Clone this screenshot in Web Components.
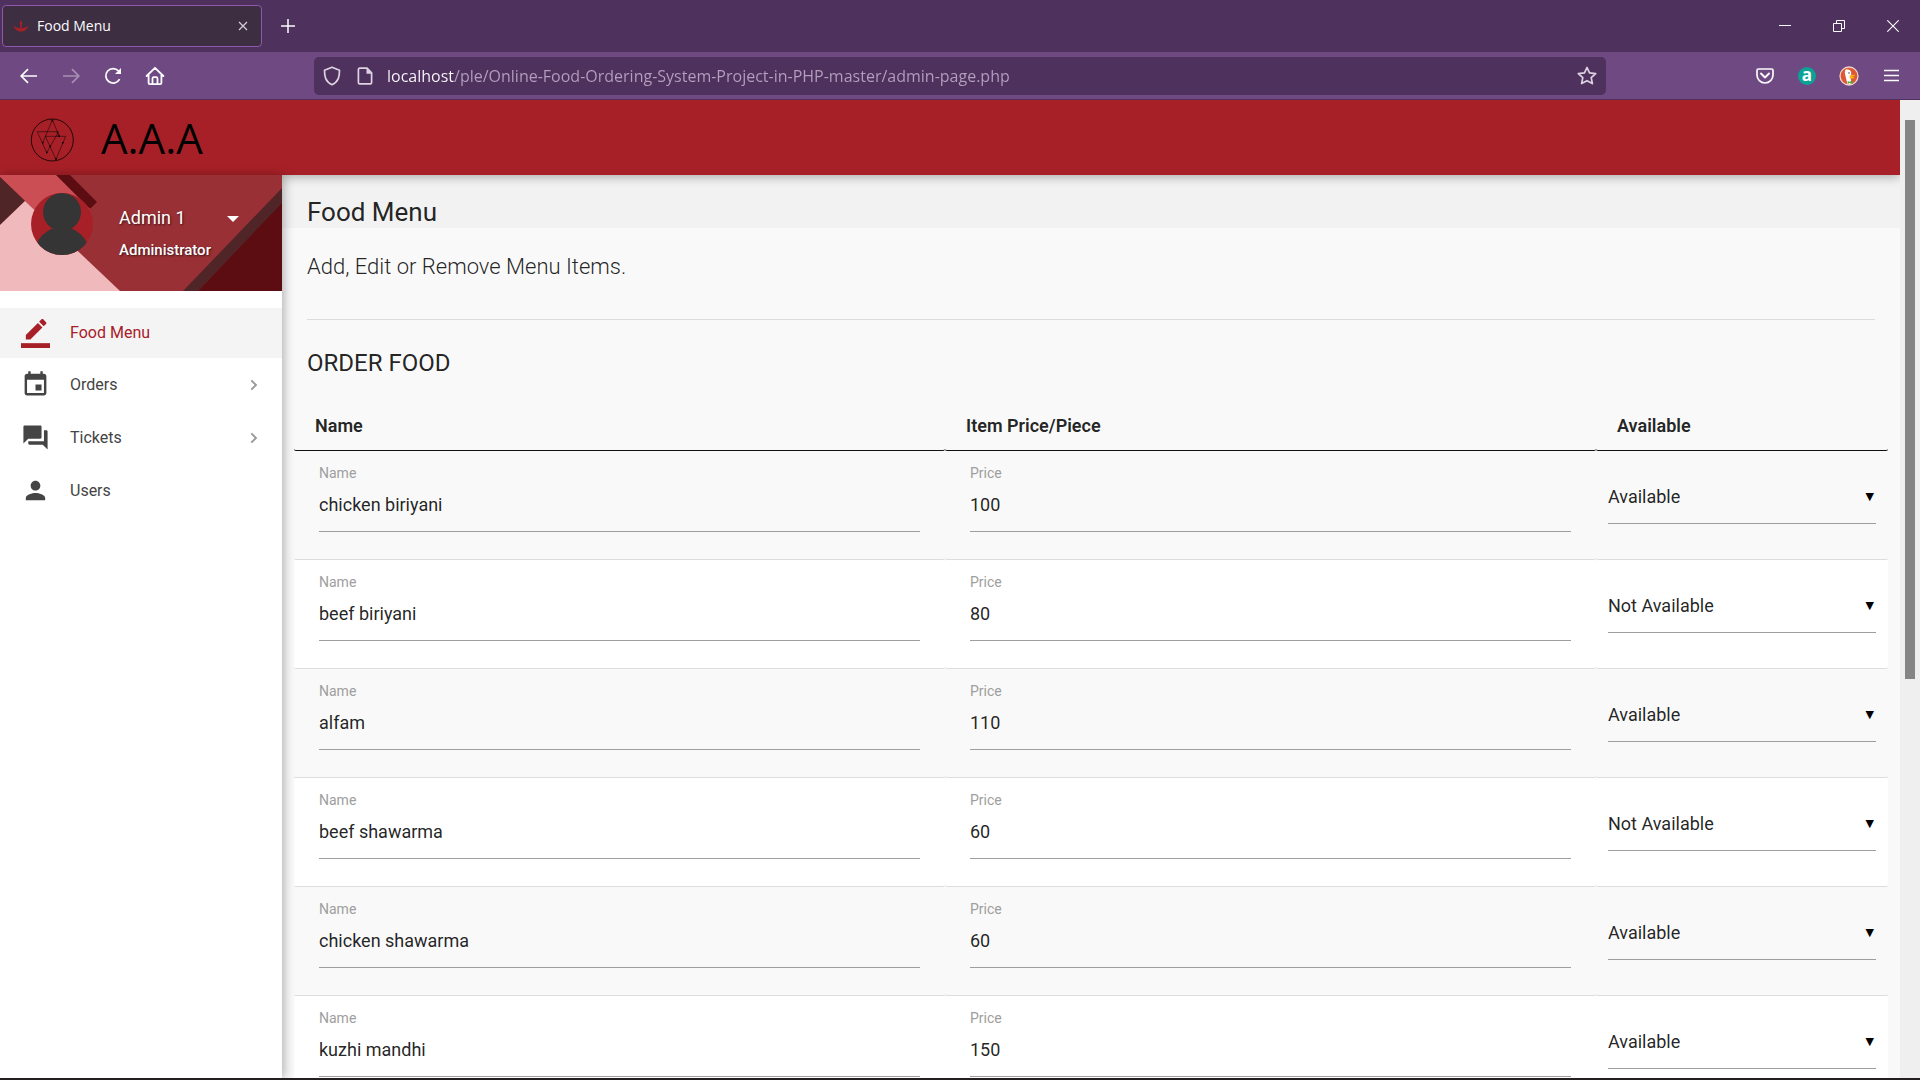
<!DOCTYPE html>
<html lang="en">
<head>
<meta charset="utf-8">
<title>Food Menu</title>
<style>
  html, body { margin: 0; height: 100%; overflow: hidden; background: #231f20; }
  body { font-family: Roboto, "Liberation Sans", sans-serif; color: rgba(0,0,0,.87); }
</style>
</head>
<body>
<browser-window>
  <browser-tab slot="tab">Food Menu</browser-tab>
  <admin-page></admin-page>
</browser-window>

<script>
const svg = (w, h, box, body) =>
  `<svg width="${w}" height="${h}" viewBox="${box}" fill="none" stroke="currentColor" aria-hidden="true">${body}</svg>`;

const ICONS = {
  back: svg(18, 16, '0 0 18 16', '<path d="M17 8H1.5M8 1.2L1.2 8 8 14.8" stroke-width="1.7"/>'),
  forward: svg(18, 16, '0 0 18 16', '<path d="M1 8h15.5M10 1.2L16.8 8 10 14.8" stroke-width="1.7"/>'),
  reload: svg(18, 18, '0 0 18 18', '<path d="M15.6 12.2A7.3 7.3 0 1 1 14.6 4" stroke-width="1.8"/><path d="M17 1v6h-6z" fill="currentColor" stroke="none"/>'),
  home: svg(20, 20, '0 0 20 20', '<path d="M1.6 10L10 1.8l8.400 8.200M3.600 8.500v8.500q0 1.200 1.200 1.200h10.400q1.200 0 1.200-1.200V8.500M7.500 18v-5.500q0-1.300 1.300-1.300h2.400q1.300 0 1.300 1.300V18" stroke-width="1.8" stroke-linejoin="round" stroke-linecap="round"/>'),
  shield: svg(18, 20, '0 0 18 20', '<path d="M9 1.300L16.500 4.300c0 6-.8 11.400-7.500 14.400C2.300 15.700 1.500 10.300 1.500 4.300z" stroke-width="1.700" stroke-linejoin="round"/>'),
  page: svg(16, 18, '0 0 16 18', '<path d="M2.800 1.200h7.200l4.600 4.600v9.600q0 1.400-1.400 1.400H2.800q-1.400 0-1.400-1.400V2.600q0-1.400 1.400-1.400z" stroke-width="1.700"/><path d="M9.500 1l5.300 5.800H9.500z" fill="currentColor" stroke="none"/>'),
  star: svg(20, 19, '0 0 20 19', '<path d="M10 1.500l2.500 5.400 6.200.7-4.500 4 1.200 6L10 14.700l-5.400 2.900 1.200-6-4.500-4 6.200-.7z" stroke-width="1.700" stroke-linejoin="round"/>'),
  pocket: svg(18, 16, '0 0 18 16', '<path d="M2.500 1h13q1.500 0 1.500 1.500V7a8 8 0 0 1-16 0V2.500Q1 1 2.500 1z" stroke-width="1.700"/><path d="M5 5.500l4 4 4-4" stroke-width="1.900" stroke-linecap="round" stroke-linejoin="round"/>'),
  menu: svg(15, 13, '0 0 15 13', '<path d="M0 1.500h15M0 6.500h15M0 11.500h15" stroke-width="1.700"/>'),
  plus: svg(16, 16, '0 0 16 16', '<path d="M8 1v14M1 8h14" stroke-width="1.500"/>'),
  closeTab: svg(10, 10, '0 0 10 10', '<path d="M1 1l8 8M9 1L1 9" stroke-width="1.200"/>'),
  minimize: svg(12, 12, '0 0 12 12', '<path d="M0 5.500h12"/>'),
  restore: svg(12, 12, '0 0 12 12', '<path d="M.5 3.500h8v8h-8zM3.500 3.500v-3h8v8h-3"/>'),
  close: svg(12, 12, '0 0 12 12', '<path d="M.3.300l11.400 11.400M11.700.300L.3 11.700" stroke-width="1.100"/>'),
  flame: svg(16, 12, '0 0 16 12', '<path d="M.3 5.500c2 2.200 4.600 2 6.700 3L7.300 5C6 3.500 7 2 8.600.200 8.400 1.800 10 3 8.800 5l-.4 3.500c2.500-1 5-.8 7.300-3-1.500 4-4.500 6-7.700 6S1.800 9.500.3 5.500z" fill="#a82027" stroke="none"/>'),
  duck: svg(20, 20, '0 0 20 20', '<circle cx="10" cy="10" r="9" fill="#de5833" stroke="#f3d5cc" stroke-width="1.300"/><path d="M8.300 17.800L6 8c-.5-2.500.2-4.300 2.600-4.500 2.600 0 3.800 1.800 3.600 4.500l-.7 3 .8 6.300q-2 1.400-4 .5z" fill="#fff" stroke="none"/><path d="M5.800 4.500q1.500-1.500 3-1.200l-2 1.900z" fill="#fff" stroke="none"/><path d="M10.500 9.500q3-1.300 6-.6-1 1.400-3.500 1.600 1.600.9 2.800.8-1.600 1.900-5.300.8z" fill="#fdb515" stroke="none"/><path d="M8.500 15l2 .8 3-1.200.3 3.200-3-.8-2 .8z" fill="#57a83f" stroke="none"/><circle cx="10" cy="7" r=".8" fill="#2d4f8e" stroke="none"/>'),
  edit: svg(29, 29, '0 0 24 24', '<g fill="currentColor" stroke="none"><path d="M17.750 7L14 3.250l-10 10V17h3.750l10-10zm2.960-2.960c.39-.39.39-1.020 0-1.410L18.370.290c-.39-.39-1.020-.39-1.410 0L15 2.250 18.750 6l1.960-1.960z"/><path d="M0 20h24v4H0z"/></g>'),
  event: svg(29, 29, '0 0 24 24', '<path fill="currentColor" stroke="none" d="M17 12h-5v5h5v-5zM16 1v2H8V1H6v2H5c-1.110 0-1.990.9-1.990 2L3 19c0 1.100.89 2 2 2h14c1.100 0 2-.9 2-2V5c0-1.100-.9-2-2-2h-1V1h-2zm3 18H5V8h14v11z"/>'),
  chat: svg(29, 29, '0 0 24 24', '<path fill="currentColor" stroke="none" d="M21 6h-2v9H6v2c0 .55.45 1 1 1h11l4 4V7c0-.55-.45-1-1-1zm-4 6V3c0-.55-.45-1-1-1H3c-.55 0-1 .45-1 1v14l4-4h10c.55 0 1-.45 1-1z"/>'),
  person: svg(29, 29, '0 0 24 24', '<path fill="currentColor" stroke="none" d="M12 12c2.210 0 4-1.790 4-4s-1.790-4-4-4-4 1.790-4 4 1.790 4 4 4zm0 2c-2.670 0-8 1.340-8 4v2h16v-2c0-2.660-5.330-4-8-4z"/>'),
  chevron: svg(8, 12, '0 0 8 12', '<path d="M1.300 1.300L6 6l-4.700 4.700" stroke-width="1.900"/>'),
  caret: svg(12, 6, '0 0 12 6', '<path d="M0 0h12L6 6z" fill="currentColor" stroke="none"/>'),
  logo: svg(44, 44, '0 0 44 44', '<circle cx="22.300" cy="22" r="21" stroke-width=".8"/><path d="M22.300 2l-9.600 22.700M22.300 2L29.300 18M7.300 13.700h21.400L16.700 34.700zM15.300 18.300h20.400L26 41.300zM29.300 18.300l-3-4.600" stroke-width=".5"/><path d="M21.500 1.500h1.700v1.700h-1.700zM25.200 40h1.700v1.700h-1.700zM16 33.800h1.500v1.500H16zM28.500 17.500h1.500V19h-1.500zM32 24h1.500v1.500H32zM19.300 27.500h1.500V29h-1.500zM12 24h1.500v1.500H12z" fill="currentColor" stroke="none"/>'),
  avatar: svg(62, 62, '0 0 62 62', '<g stroke="none"><circle cx="31" cy="31" r="31" fill="#a82027"/><clipPath id="c"><circle cx="31" cy="31" r="31"/></clipPath><g clip-path="url(#c)" fill="#353535"><circle cx="31" cy="19" r="19"/><ellipse cx="31" cy="61" rx="27.500" ry="27"/></g></g>')
};

function define(name, markup) {
  const template = document.createElement('template');
  customElements.define(name, class extends HTMLElement {
    connectedCallback() {
      if (this.shadowRoot) return;
      const root = this.attachShadow({ mode: 'open' });
      template.innerHTML = typeof markup === 'function' ? markup(this) : markup;
      root.append(template.content.cloneNode(true));
    }
  });
}

define('ui-icon', el => `
  <style>:host { display: inline-flex; } svg { display: block; }</style>
  ${ICONS[el.getAttribute('name')]}`);

define('icon-button', el => `
  <style>
    :host { display: flex; width: 42px; height: 38px; }
    button { flex: 1; display: flex; align-items: center; justify-content: center; padding: 0; border: 0; background: none; color: inherit; }
  </style>
  <button type="button" aria-label="${el.getAttribute('label')}"><slot></slot></button>`);

define('browser-tab', `
  <style>
    :host { display: flex; align-items: center; gap: 8px; box-sizing: border-box; width: 260px; height: 42px; margin: 5px 0 5px 2px; padding: 0 4px 0 10px;
      border: 1px solid #8f57ad; border-radius: 4px; background: #3d2f41; color: #fbfbfe;
      font: 14px/20px "Open Sans", "Noto Sans", sans-serif; }
    span { flex: 1; }
    icon-button { width: 28px; color: #d5cfd8; }
  </style>
  <ui-icon name="flame"></ui-icon><span><slot></slot></span>
  <icon-button label="Close tab"><ui-icon name="closeTab"></ui-icon></icon-button>`);

define('address-bar', `
  <style>
    :host { display: flex; align-items: center; height: 38px; box-sizing: border-box; padding: 0 9px; border-radius: 5px; background: #4f315e; color: #ddd3e2; }
    form { flex: 1; display: flex; margin: 0 0 0 14px; }
    input { flex: 1; padding: 0; border: 0; outline: 0; height: 30px; font: 16px/30px "Open Sans", "Noto Sans", sans-serif; color: #b3a0be;
      background: linear-gradient(90deg, #fbfbfe 67px, #b3a0be 67px); -webkit-background-clip: text; background-clip: text; -webkit-text-fill-color: transparent; }
    .page { margin-left: 16px; }
  </style>
  <ui-icon name="shield"></ui-icon>
  <ui-icon class="page" name="page"></ui-icon>
  <form><input type="text" aria-label="Address" value="localhost/ple/Online-Food-Ordering-System-Project-in-PHP-master/admin-page.php"></form>
  <ui-icon name="star"></ui-icon>`);

define('browser-window', `
  <style>
    :host { display: flex; flex-direction: column; height: calc(100vh - 2px); overflow: hidden; }
    .tabs { display: flex; align-items: center; height: 52px; background: #4f315e; color: #fbfbfe; }
    .tabs > icon-button { width: 54px; }
    .tabs > .new { width: 52px; }
    .spacer { flex: 1; }
    .tools { display: grid; grid-template-columns: 314px minmax(0, 1fr) 314px; align-items: center; height: 48px; box-sizing: border-box; background: #6f4a82; border-bottom: 1px solid #4f315e; color: #fbfbfe; }
    .group { display: flex; padding: 0 8px; }
    .end { justify-content: flex-end; }
    .off { color: #a68fb2; }
    .ext { width: 18px; height: 18px; border-radius: 50%; background: #0aa396; color: #fff; font: 700 17px/15px "Open Sans", sans-serif; text-align: center; }
    main { flex: 1; min-height: 0; display: grid; }
  </style>
  <div class="tabs">
    <slot name="tab"></slot>
    <icon-button class="new" label="New tab"><ui-icon name="plus"></ui-icon></icon-button>
    <span class="spacer"></span>
    <icon-button label="Minimize"><ui-icon name="minimize"></ui-icon></icon-button>
    <icon-button label="Restore"><ui-icon name="restore"></ui-icon></icon-button>
    <icon-button label="Close"><ui-icon name="close"></ui-icon></icon-button>
  </div>
  <div class="tools">
    <div class="group">
      <icon-button label="Back"><ui-icon name="back"></ui-icon></icon-button>
      <icon-button class="off" label="Forward"><ui-icon name="forward"></ui-icon></icon-button>
      <icon-button label="Reload"><ui-icon name="reload"></ui-icon></icon-button>
      <icon-button label="Home"><ui-icon name="home"></ui-icon></icon-button>
    </div>
    <address-bar></address-bar>
    <div class="group end">
      <icon-button label="Pocket"><ui-icon name="pocket"></ui-icon></icon-button>
      <icon-button label="Extension"><span class="ext">a</span></icon-button>
      <icon-button label="Privacy"><ui-icon name="duck"></ui-icon></icon-button>
      <icon-button label="Menu"><ui-icon name="menu"></ui-icon></icon-button>
    </div>
  </div>
  <main><slot></slot></main>`);

define('site-header', `
  <style>
    :host { display: flex; align-items: center; height: 75px; box-sizing: border-box; padding: 4px 0 0 30px; gap: 27px; position: relative; z-index: 1;
      background: #a82027; color: #000; box-shadow: 0 2px 10px rgba(0,0,0,.3); }
    h1 { margin: 0; padding-bottom: 3px; font: 400 42px/56px "Open Sans", sans-serif; }
  </style>
  <ui-icon name="logo"></ui-icon><h1>A.A.A</h1>`);

define('profile-card', `
  <style>
    :host { display: grid; height: 116px; overflow: hidden; color: #fff; background: #993036; }
    .art, .card { grid-area: 1 / 1; }
    .art { width: 100%; height: 116px; }
    .card { display: flex; align-items: flex-start; gap: 26px; padding: 18px 43px 0 31px; }
    .who { flex: 1; display: flex; flex-direction: column; gap: 8px; padding-top: 13px; text-shadow: 1px 1px 2px rgba(0,0,0,.6); }
    button { display: flex; align-items: center; justify-content: space-between; padding: 0; border: 0; background: none; color: inherit; font: 400 18px/24px Roboto, sans-serif; text-shadow: inherit; }
    button ui-icon { margin-top: 2px; }
    p { margin: 0; font: 500 15px/24px Roboto, sans-serif; }
  </style>
  <svg class="art" viewBox="0 0 282 116" preserveAspectRatio="none" aria-hidden="true">
    <path fill="#993036" d="M0 0h282v116H0z"/>
    <path fill="#cb4e54" d="M0 0h57l34 33-28 29L0 2z"/>
    <path fill="#5c0d12" d="M56 0h14l27 27-7 7z"/>
    <path fill="#502527" d="M0 2l25 24L0 50z"/>
    <path fill="#f0b9bb" d="M25 26l95 90H0V50z"/>
    <path fill="#502527" d="M282 13v16l-84 87h-15z"/>
    <path fill="#5c0d12" d="M282 28v88h-84z"/>
  </svg>
  <div class="card">
    <ui-icon name="avatar"></ui-icon>
    <div class="who">
      <button type="button">Admin 1 <ui-icon name="caret"></ui-icon></button>
      <p>Administrator</p>
    </div>
  </div>`);

define('nav-item', el => `
  <style>
    :host { display: block; color: #444; }
    a { display: flex; align-items: center; height: 53px; padding: 0 24px 0 21px; color: inherit; text-decoration: none; font-size: 16px; line-height: 24px; }
    :host([active]) { color: #a82027; background: #f4f4f4; }
    :host([active]) a { height: 50px; }
    span { flex: 1; margin-left: 20px; }
    .more { color: #999; }
  </style>
  <a href="#"><ui-icon name="${el.getAttribute('icon')}"></ui-icon><span><slot></slot></span>
  ${el.hasAttribute('more') ? '<ui-icon class="more" name="chevron"></ui-icon>' : ''}</a>`);

define('side-nav', `
  <style>
    :host { display: block; position: relative; z-index: 2; background: #fff; box-shadow: 2px 0 10px rgba(0,0,0,.3); }
    nav { padding-top: 17px; }
  </style>
  <profile-card></profile-card>
  <nav>
    <nav-item icon="edit" active>Food Menu</nav-item>
    <nav-item icon="event" more>Orders</nav-item>
    <nav-item icon="chat" more>Tickets</nav-item>
    <nav-item icon="person">Users</nav-item>
  </nav>`);

define('text-field', el => `
  <style>
    :host { display: block; padding: 13px 25px 0; }
    label { display: block; font-size: 14px; line-height: 18px; color: #9e9e9e; }
    input { display: block; box-sizing: border-box; width: 100%; height: 50px; padding: 0 0 4px; border: 0; border-bottom: 1px solid #9e9e9e; outline: 0; background: none; color: inherit; font: 18px/24px Roboto, sans-serif; }
  </style>
  <label for="field">${el.getAttribute('label')}</label>
  <input id="field" type="text" value="${el.getAttribute('value')}">`);

define('select-field', el => `
  <style>
    :host { display: grid; align-items: center; margin: 24px 12px 0; border-bottom: 1px solid #9e9e9e; padding-bottom: 4px; }
    select, span { grid-area: 1 / 1; }
    select { appearance: none; width: 100%; height: 44px; padding: 0; border: 0; border-radius: 0; outline: 0; background: none; color: inherit; font: 18px/24px Roboto, sans-serif; }
    span { justify-self: end; margin-right: 2px; color: #000; font: 11px/12px "DejaVu Sans", sans-serif; pointer-events: none; }
  </style>
  <select aria-label="Availability">
    ${['Available', 'Not Available'].map(o => `<option${o === el.getAttribute('value') ? ' selected' : ''}>${o}</option>`).join('')}
  </select><span aria-hidden="true">▼</span>`);

const ITEMS = [
  ['chicken biriyani', 100, 'Available'],
  ['beef biriyani', 80, 'Not Available'],
  ['alfam', 110, 'Available'],
  ['beef shawarma', 60, 'Not Available'],
  ['chicken shawarma', 60, 'Available'],
  ['kuzhi mandhi', 150, 'Available']
];

define('menu-table', () => `
  <style>
    :host { display: block; padding: 0 12px; }
    table { width: 100%; table-layout: fixed; border-collapse: separate; border-spacing: 0; }
    th:last-child { width: 271px; }
    th { height: 49px; padding: 0 0 0 21px; border-bottom: 1px solid #111; border-radius: 2px; text-align: left; font: 600 18px/24px Roboto, sans-serif; }
    td { height: 108px; padding: 0; vertical-align: top; border-bottom: 1px solid #ddd; border-radius: 2px; }
    tbody tr:nth-child(even) { background: #fff; }
  </style>
  <table>
    <thead><tr><th>Name</th><th>Item Price/Piece</th><th>Available</th></tr></thead>
    <tbody>${ITEMS.map(([name, price, state]) => `
      <tr>
        <td><text-field label="Name" value="${name}"></text-field></td>
        <td><text-field label="Price" value="${price}"></text-field></td>
        <td><select-field value="${state}"></select-field></td>
      </tr>`).join('')}
    </tbody>
  </table>`);

define('page-content', `
  <style>
    :host { display: block; overflow: hidden; background: #f9f9f9; }
    h2, h3, p { margin: 0; font-weight: 400; }
    h2 { padding: 21px 25px 0; background: #f2f2f2; font-size: 26px; line-height: 32px; }
    section { margin: 0 25px; }
    p { padding: 25px 0 38px; border-bottom: 1px solid #ddd; font-size: 22px; font-weight: 300; line-height: 28px; }
    h3 { padding: 28px 0 23px; font-size: 24px; line-height: 30px; }
  </style>
  <h2>Food Menu</h2>
  <section><p>Add, Edit or Remove Menu Items.</p><h3>ORDER FOOD</h3></section>
  <menu-table></menu-table>`);

define('admin-page', `
  <style>
    :host { display: grid; grid-template-columns: minmax(0, 1fr) 20px; min-height: 0; }
    .view { display: flex; flex-direction: column; min-height: 0; overflow: hidden; }
    .body { flex: 1; display: grid; grid-template-columns: 282px minmax(0, 1fr); min-height: 0; }
    .rail { display: grid; grid-template-rows: 7fr 5fr; padding: 20px 5px 0; background: #efefef; }
    .thumb { background: #858585; }
  </style>
  <div class="view">
    <site-header></site-header>
    <div class="body"><side-nav></side-nav><page-content></page-content></div>
  </div>
  <div class="rail"><div class="thumb"></div></div>`);
</script>
</body>
</html>
